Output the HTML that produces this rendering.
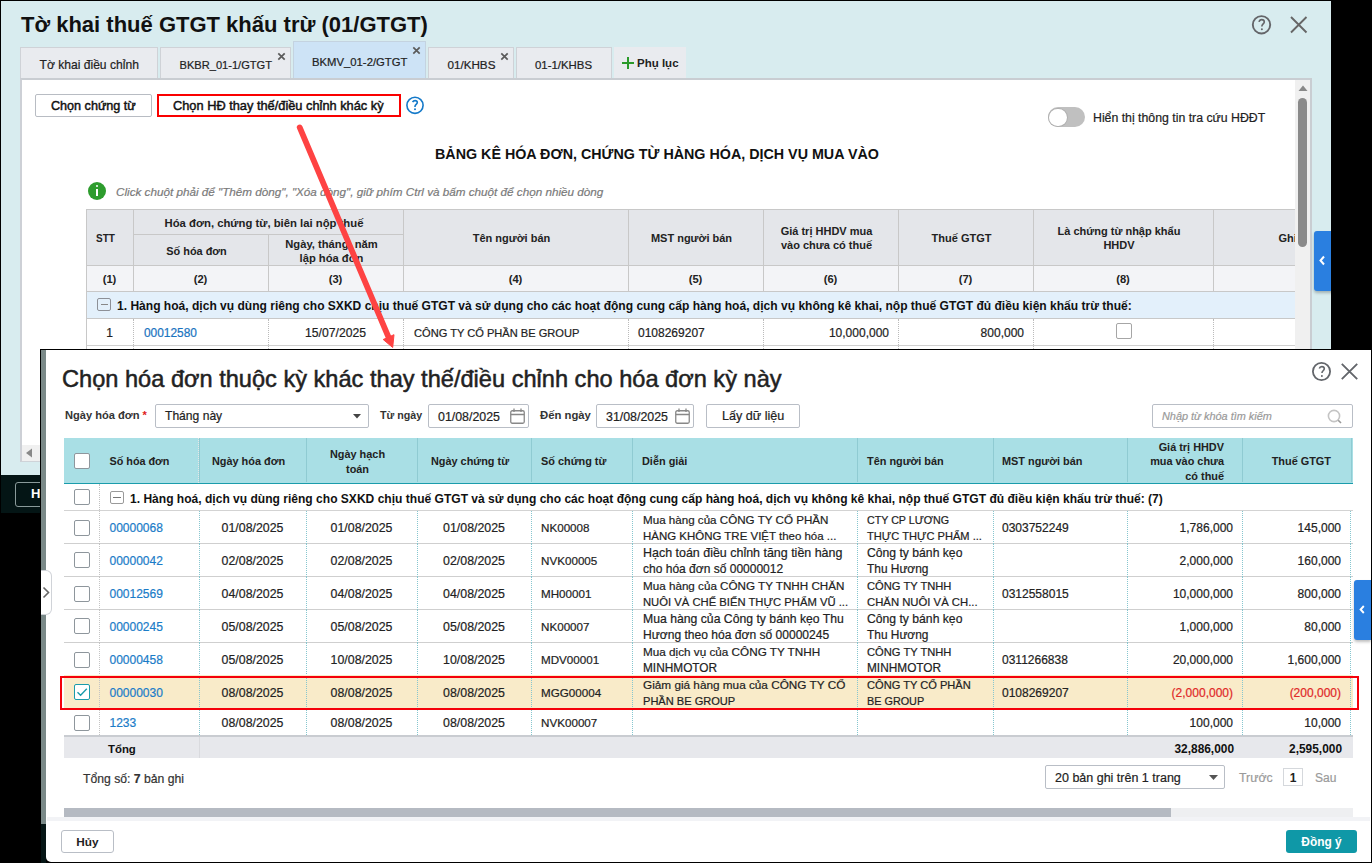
<!DOCTYPE html><html><head><meta charset="utf-8"><style>
*{box-sizing:border-box;margin:0;padding:0}
html,body{width:1372px;height:863px;overflow:hidden;background:#000;font-family:"Liberation Sans",sans-serif;color:#222}
div,svg{position:absolute}
.t{white-space:nowrap;line-height:16px}
.t:not(.b){-webkit-text-stroke:0.2px currentColor}
.b{font-weight:bold}
.c{text-align:center}
.r{text-align:right}
</style></head><body>
<div style="left:1px;top:1px;width:1330px;height:474px;background:#d8ecef;overflow:hidden">
<div class="t b" style="left:20px;top:11px;font-size:22px;line-height:26px;color:#111">Tờ khai thuế GTGT khấu trừ (01/GTGT)</div>
<svg style="left:1250px;top:13px" width="21" height="21" viewBox="0 0 21 21"><circle cx="10.5" cy="10.8" r="8.7" fill="none" stroke="#646569" stroke-width="1.9"/><path d="M8 7.9c0.4-1.5 1.4-2.3 2.7-2.3c1.5 0 2.6 1 2.6 2.3c0 1.8-2.4 2.2-2.4 4.2v0.4" fill="none" stroke="#646569" stroke-width="1.6"/><circle cx="10.9" cy="15.3" r="1" fill="#646569"/></svg>
<svg style="left:1289px;top:15px" width="18" height="18" viewBox="0 0 18 18"><path d="M1 1L16.5 16.5M16.5 1L1 16.5" stroke="#666" stroke-width="1.9"/></svg>
<div style="left:19px;top:46px;width:138px;height:31px;background:#e9ebef;border:1px solid #cfd2d7;border-bottom:none"></div>
<div class="t" style="left:38.5px;top:56px;font-size:12.1px;color:#222">Tờ khai điều chỉnh</div>
<div style="left:159px;top:46px;width:131px;height:31px;background:#e9ebef;border:1px solid #cfd2d7;border-bottom:none"></div>
<div class="t" style="left:178.5px;top:56px;font-size:11.1px;color:#222">BKBR_01-1/GTGT</div>
<svg style="left:276px;top:51px" width="9" height="9" viewBox="0 0 9 9"><path d="M1.3 1.3L7.7 7.7M7.7 1.3L1.3 7.7" stroke="#5a5a5a" stroke-width="1.7"/></svg>
<div style="left:292px;top:40px;width:133px;height:37px;background:#cde3f6;border:1px solid #c4d3e0;border-bottom:none"></div>
<div class="t" style="left:311px;top:53px;font-size:11.3px;color:#222">BKMV_01-2/GTGT</div>
<svg style="left:411px;top:45px" width="9" height="9" viewBox="0 0 9 9"><path d="M1.3 1.3L7.7 7.7M7.7 1.3L1.3 7.7" stroke="#5a5a5a" stroke-width="1.7"/></svg>
<div style="left:427px;top:46px;width:86px;height:31px;background:#e9ebef;border:1px solid #cfd2d7;border-bottom:none"></div>
<div class="t" style="left:446.4px;top:56px;font-size:11.7px;color:#222">01/KHBS</div>
<svg style="left:499px;top:51px" width="9" height="9" viewBox="0 0 9 9"><path d="M1.3 1.3L7.7 7.7M7.7 1.3L1.3 7.7" stroke="#5a5a5a" stroke-width="1.7"/></svg>
<div style="left:515px;top:46px;width:96px;height:31px;background:#e9ebef;border:1px solid #cfd2d7;border-bottom:none"></div>
<div class="t" style="left:534px;top:56px;font-size:11.4px;color:#222">01-1/KHBS</div>
<div style="left:613px;top:46px;width:72px;height:31px;background:#e9ebef"></div>
<svg style="left:621px;top:56px" width="12" height="12" viewBox="0 0 12 12"><path d="M6 0V12M0 6H12" stroke="#2a9a2a" stroke-width="2"/></svg>
<div class="t b" style="left:636px;top:54px;font-size:11.5px;color:#222">Phụ lục</div>
<div style="left:19px;top:77px;width:1292px;height:384px;background:#fff;border-top:2px solid #c9cdd2;border-right:2px solid #c9cdd2;border-left:2px solid #cdd0d6;border-bottom:1px solid #cfd3d8;overflow:hidden">
<div style="left:13px;top:14px;width:117px;height:23px;border:1px solid #b8bcc3;border-radius:2px;background:#fff"></div>
<div class="t" style="left:29px;top:18px;font-size:12.6px;color:#111;-webkit-text-stroke:0.45px #111">Chọn chứng từ</div>
<div style="left:135px;top:14px;width:244px;height:23px;border:2px solid #fa0000;background:#fff"></div>
<div class="t" style="left:151px;top:18px;font-size:12.8px;color:#111;-webkit-text-stroke:0.45px #111">Chọn HĐ thay thế/điều chỉnh khác kỳ</div>
<svg style="left:383px;top:15px" width="20" height="20" viewBox="0 0 20 20"><circle cx="10" cy="10.3" r="8.1" fill="none" stroke="#1479c9" stroke-width="1.6"/><path d="M7.6 7.1c0.5-1 1.3-1.5 2.4-1.5c1.3 0 2.3 0.8 2.3 2c0 1.7-2.3 2-2.3 3.8v0.5" fill="none" stroke="#1479c9" stroke-width="1.6"/><circle cx="10" cy="14.2" r="1" fill="#1479c9"/></svg>
<div style="left:1026px;top:27px;width:37px;height:20px;border-radius:10px;background:#c0c0c0"></div>
<div style="left:1027px;top:28.5px;width:17.5px;height:17.5px;border-radius:9px;background:#fff;box-shadow:0 0 0 1px #b0b0b0"></div>
<div class="t" style="left:1071px;top:30px;font-size:12.3px;color:#222">Hiển thị thông tin tra cứu HĐĐT</div>
<div class="t b" style="left:413px;top:66px;font-size:14.3px;color:#111">BẢNG KÊ HÓA ĐƠN, CHỨNG TỪ HÀNG HÓA, DỊCH VỤ MUA VÀO</div>
<div style="left:66px;top:102px;width:18px;height:18px;border-radius:9px;background:#2d9c2d"></div>
<div style="left:74px;top:105px;width:2.4px;height:2.4px;background:#fff;border-radius:1px"></div>
<div style="left:74px;top:109px;width:2.4px;height:7px;background:#fff"></div>
<div class="t" style="left:94px;top:104px;font-size:11.7px;font-style:italic;color:#7a7a7a">Click chuột phải để "Thêm dòng", "Xóa dòng", giữ phím Ctrl và bấm chuột để chọn nhiều dòng</div>
<div style="left:64px;top:129px;width:1209px;height:56px;background:#e4e6ea"></div>
<div style="left:64px;top:185px;width:1209px;height:26px;background:#f3f4f7"></div>
<div style="left:64px;top:211px;width:1209px;height:27px;background:#e3f0fb"></div>
<div style="left:64px;top:129px;width:1209px;height:1px;background:#c8c8c8"></div>
<div style="left:64px;top:185px;width:1209px;height:1px;background:#c8c8c8"></div>
<div style="left:64px;top:211px;width:1209px;height:1px;background:#c8c8c8"></div>
<div style="left:64px;top:238px;width:1209px;height:1px;background:#c8c8c8"></div>
<div style="left:111px;top:154px;width:270px;height:1px;background:#c8c8c8"></div>
<div style="left:64px;top:265px;width:1209px;height:1px;background:#d0d0d0"></div>
<div style="left:64px;top:129px;width:1px;height:82px;background:#c8c8c8"></div>
<div style="left:111px;top:129px;width:1px;height:82px;background:#c8c8c8"></div>
<div style="left:381px;top:129px;width:1px;height:82px;background:#c8c8c8"></div>
<div style="left:606px;top:129px;width:1px;height:82px;background:#c8c8c8"></div>
<div style="left:741px;top:129px;width:1px;height:82px;background:#c8c8c8"></div>
<div style="left:876px;top:129px;width:1px;height:82px;background:#c8c8c8"></div>
<div style="left:1011px;top:129px;width:1px;height:82px;background:#c8c8c8"></div>
<div style="left:1191px;top:129px;width:1px;height:82px;background:#c8c8c8"></div>
<div style="left:246px;top:154px;width:1px;height:57px;background:#c8c8c8"></div>
<div style="left:246px;top:154px;width:1px;height:31px;background:#c8c8c8"></div>
<div style="left:111px;top:239px;width:0;height:60px;border-left:1px dotted #bbb"></div>
<div style="left:246px;top:239px;width:0;height:60px;border-left:1px dotted #bbb"></div>
<div style="left:381px;top:239px;width:0;height:60px;border-left:1px dotted #bbb"></div>
<div style="left:606px;top:239px;width:0;height:60px;border-left:1px dotted #bbb"></div>
<div style="left:741px;top:239px;width:0;height:60px;border-left:1px dotted #bbb"></div>
<div style="left:876px;top:239px;width:0;height:60px;border-left:1px dotted #bbb"></div>
<div style="left:1011px;top:239px;width:0;height:60px;border-left:1px dotted #bbb"></div>
<div style="left:1191px;top:239px;width:0;height:60px;border-left:1px dotted #bbb"></div>
<div style="left:64px;top:129px;width:1px;height:169px;background:#c8c8c8"></div>
<div class="b c" style="left:60px;top:151.5px;width:47px;font-size:10px;line-height:14px;color:#222">STT</div>
<div class="b c" style="left:107px;top:135.5px;width:270px;font-size:11.3px;line-height:14px;color:#222">Hóa đơn, chứng từ, biên lai nộp thuế</div>
<div class="b c" style="left:107px;top:163.5px;width:135px;font-size:10.9px;line-height:14px;color:#222">Số hóa đơn</div>
<div class="b c" style="left:242px;top:156.5px;width:135px;font-size:11.2px;line-height:14px;color:#222">Ngày, tháng, năm<br>lập hóa đơn</div>
<div class="b c" style="left:377px;top:151.0px;width:225px;font-size:11px;line-height:14px;color:#222">Tên người bán</div>
<div class="b c" style="left:602px;top:151.0px;width:135px;font-size:11px;line-height:14px;color:#222">MST người bán</div>
<div class="b c" style="left:737px;top:144.0px;width:135px;font-size:11px;line-height:14px;color:#222">Giá trị HHDV mua<br>vào chưa có thuế</div>
<div class="b c" style="left:872px;top:151.0px;width:135px;font-size:11px;line-height:14px;color:#222">Thuế GTGT</div>
<div class="b c" style="left:1007px;top:144.0px;width:180px;font-size:11px;line-height:14px;color:#222">Là chứng từ nhập khẩu<br>HHDV</div>
<div class="b c" style="left:1187px;top:151.0px;width:180px;font-size:11px;line-height:14px;color:#222">Ghi chú</div>
<div class="b c" style="left:64px;top:192.0px;width:47px;font-size:11.2px;line-height:14px;color:#222">(1)</div>
<div class="b c" style="left:111px;top:192.0px;width:135px;font-size:11.2px;line-height:14px;color:#222">(2)</div>
<div class="b c" style="left:246px;top:192.0px;width:135px;font-size:11.2px;line-height:14px;color:#222">(3)</div>
<div class="b c" style="left:381px;top:192.0px;width:225px;font-size:11.2px;line-height:14px;color:#222">(4)</div>
<div class="b c" style="left:606px;top:192.0px;width:135px;font-size:11.2px;line-height:14px;color:#222">(5)</div>
<div class="b c" style="left:741px;top:192.0px;width:135px;font-size:11.2px;line-height:14px;color:#222">(6)</div>
<div class="b c" style="left:876px;top:192.0px;width:135px;font-size:11.2px;line-height:14px;color:#222">(7)</div>
<div class="b c" style="left:1011px;top:192.0px;width:180px;font-size:11.2px;line-height:14px;color:#222">(8)</div>
<div class="b c" style="left:1191px;top:192.0px;width:180px;font-size:11.2px;line-height:14px;color:#222">(9)</div>
<div style="left:75px;top:218px;width:14px;height:13px;border:1px solid #8d9097;border-radius:2px"></div>
<div style="left:78.5px;top:224px;width:7px;height:1px;background:#888"></div>
<div class="t b" style="left:95px;top:218px;font-size:12.05px;color:#111">1. Hàng hoá, dịch vụ dùng riêng cho SXKD chịu thuế GTGT và sử dụng cho các hoạt động cung cấp hàng hoá, dịch vụ không kê khai, nộp thuế GTGT đủ điều kiện khấu trừ thuế:</div>
<div class="t c" style="left:64px;top:245px;width:47px;font-size:12px">1</div>
<div class="t" style="left:122px;top:245px;font-size:11.9px;color:#1a73c0">00012580</div>
<div class="t c" style="left:246px;top:245px;width:135px;font-size:12.2px">15/07/2025</div>
<div class="t" style="left:392px;top:245px;font-size:11.1px">CÔNG TY CỔ PHẦN BE GROUP</div>
<div class="t" style="left:616px;top:245px;font-size:12px">0108269207</div>
<div class="t r" style="left:742px;top:245px;width:125px;font-size:12px">10,000,000</div>
<div class="t r" style="left:877px;top:245px;width:125px;font-size:12px">800,000</div>
<div style="left:1094px;top:243px;width:16px;height:16px;border:1px solid #a6a6a6;border-radius:2px;background:#fff"></div>
<div style="left:1273px;top:0px;width:16px;height:365px;background:#f0f0f0"></div>
<svg style="left:1276px;top:5px" width="10" height="7" viewBox="0 0 10 7"><path d="M5 0.5L9.5 6H0.5Z" fill="#888"/></svg>
<div style="left:1276px;top:18px;width:9px;height:149px;border-radius:4.5px;background:#8a8a8a"></div>
<div style="left:-1px;top:365px;width:1274px;height:16px;background:#f0f0f0"></div>
<svg style="left:3px;top:368px" width="8" height="10" viewBox="0 0 8 10"><path d="M1 5L7 0.5V9.5Z" fill="#888"/></svg>
</div>
<div style="left:1313px;top:230px;width:20px;height:60px;background:#2a7fe0;border-radius:3px 0 0 3px;box-shadow:0 2px 3px rgba(0,0,0,.25)"></div>
<svg style="left:1317px;top:254px" width="8" height="11" viewBox="0 0 8 11"><path d="M6 1.5L2.5 5.5L6 9.5" fill="none" stroke="#fff" stroke-width="2"/></svg>
</div>
<div style="left:1px;top:475px;width:40px;height:38px;background:#041515"></div>
<div style="left:15px;top:482px;width:40px;height:25px;border:1px solid #8a9a9a;border-radius:3px"></div>
<div class="t b" style="left:31px;top:486px;font-size:13px;color:#fff">H</div>
<div style="left:40px;top:349px;width:1332px;height:1px;background:#000"></div>
<div style="left:40px;top:349px;width:1px;height:514px;background:#000"></div>
<div style="left:41px;top:350px;width:5px;height:474px;background:#7a8988"></div>
<div style="left:41px;top:824px;width:5px;height:39px;background:#051515"></div>
<div id="fg" style="left:46px;top:350px;width:1325px;height:512px;background:#fff;border-radius:5px 0 0 5px;overflow:hidden">
<div class="t" style="left:16px;top:15px;font-size:23.6px;line-height:28px;color:#222;-webkit-text-stroke:0.5px #222">Chọn hóa đơn thuộc kỳ khác thay thế/điều chỉnh cho hóa đơn kỳ này</div>
<svg style="left:1266px;top:12px" width="20" height="20" viewBox="0 0 20 20"><circle cx="9.5" cy="9.5" r="8.6" fill="none" stroke="#63666b" stroke-width="1.8"/><path d="M7.3 6.6c0.4-1.3 1.3-2 2.5-2c1.5 0 2.5 1 2.5 2.2c0 1.8-2.3 2.1-2.3 3.9v0.4" fill="none" stroke="#63666b" stroke-width="1.6"/><circle cx="9.9" cy="13.9" r="1" fill="#63666b"/></svg>
<svg style="left:1295px;top:13px" width="17" height="17" viewBox="0 0 17 17"><path d="M0.8 0.8L16.2 16.2M16.2 0.8L0.8 16.2" stroke="#63666b" stroke-width="1.9"/></svg>
<div class="t b" style="left:19px;top:57px;font-size:11.1px;color:#333">Ngày hóa đơn <span style="color:#e02020">*</span></div>
<div style="left:109px;top:54px;width:214px;height:24px;border:1px solid #b9bec6;border-radius:2px"></div>
<div class="t" style="left:119px;top:58px;font-size:12.1px;color:#222">Tháng này</div>
<svg style="left:307px;top:64px" width="8" height="5" viewBox="0 0 8 5"><path d="M0 0H8L4 4.5Z" fill="#444"/></svg>
<div class="t b" style="left:334px;top:57px;font-size:10.7px;color:#333">Từ ngày</div>
<div style="left:382px;top:54px;width:101px;height:24px;border:1px solid #b9bec6;border-radius:2px"></div>
<div class="t" style="left:392px;top:59px;font-size:12.4px;color:#222">01/08/2025</div>
<svg style="left:464px;top:58px" width="15" height="16" viewBox="0 0 15 16"><rect x="0.75" y="2.75" width="13.5" height="12.5" rx="1.5" fill="none" stroke="#888" stroke-width="1.3"/><path d="M0.75 6.5H14.25M4 0.5V4M11 0.5V4" stroke="#888" stroke-width="1.3"/></svg>
<div style="left:550px;top:54px;width:98px;height:24px;border:1px solid #b9bec6;border-radius:2px"></div>
<div class="t" style="left:560px;top:59px;font-size:12.4px;color:#222">31/08/2025</div>
<svg style="left:629px;top:58px" width="15" height="16" viewBox="0 0 15 16"><rect x="0.75" y="2.75" width="13.5" height="12.5" rx="1.5" fill="none" stroke="#888" stroke-width="1.3"/><path d="M0.75 6.5H14.25M4 0.5V4M11 0.5V4" stroke="#888" stroke-width="1.3"/></svg>
<div class="t b" style="left:494px;top:57px;font-size:11.3px;color:#333">Đến ngày</div>
<div style="left:660px;top:54px;width:94px;height:24px;border:1px solid #b9bec6;border-radius:2px"></div>
<div class="t" style="left:676px;top:58px;font-size:12.6px;color:#222">Lấy dữ liệu</div>
<div style="left:1106px;top:54px;width:201px;height:24px;border:1px solid #b9bec6;border-radius:2px"></div>
<div class="t" style="left:1116px;top:58px;font-size:10.9px;font-style:italic;color:#9a9a9a">Nhập từ khóa tìm kiếm</div>
<svg style="left:1281px;top:59px" width="16" height="16" viewBox="0 0 16 16"><circle cx="7" cy="7" r="5.6" fill="none" stroke="#c4c4c4" stroke-width="1.6"/><path d="M11.2 11.2L14 14" stroke="#999" stroke-width="1.6"/></svg>
<div style="left:18px;top:88px;width:1289px;height:46px;background:#a9dfe5;border-bottom:1px solid #1a9cab"></div>
<div style="left:153px;top:88px;width:1px;height:44px;background:#8fcbd2"></div>
<div style="left:260px;top:88px;width:1px;height:44px;background:#8fcbd2"></div>
<div style="left:371px;top:88px;width:1px;height:44px;background:#8fcbd2"></div>
<div style="left:485px;top:88px;width:1px;height:44px;background:#8fcbd2"></div>
<div style="left:586px;top:88px;width:1px;height:44px;background:#8fcbd2"></div>
<div style="left:811px;top:88px;width:1px;height:44px;background:#8fcbd2"></div>
<div style="left:947px;top:88px;width:1px;height:44px;background:#8fcbd2"></div>
<div style="left:1081px;top:88px;width:1px;height:44px;background:#8fcbd2"></div>
<div style="left:1196px;top:88px;width:1px;height:44px;background:#8fcbd2"></div>
<div style="left:1305px;top:88px;width:1px;height:44px;background:#8fcbd2"></div>
<div style="left:152px;top:88px;width:0;height:45px;border-left:1px dotted #e6e6e6"></div>
<div style="left:28px;top:103px;width:16px;height:16px;border:1px solid #8e969c;border-radius:2px;background:#fff"></div>
<div class="b" style="left:63.5px;top:104.2px;font-size:10.8px;line-height:14.5px;color:#222;white-space:nowrap">Số hóa đơn</div>
<div class="b c" style="left:153px;top:104.2px;width:99px;font-size:10.9px;line-height:14.5px;color:#222;white-space:nowrap">Ngày hóa đơn</div>
<div class="b c" style="left:260px;top:97.0px;width:103px;font-size:10.9px;line-height:14.5px;color:#222;white-space:nowrap">Ngày hạch<br>toán</div>
<div class="b c" style="left:371px;top:104.2px;width:106px;font-size:10.9px;line-height:14.5px;color:#222;white-space:nowrap">Ngày chứng từ</div>
<div class="b" style="left:495px;top:104.2px;font-size:10.9px;line-height:14.5px;color:#222;white-space:nowrap">Số chứng từ</div>
<div class="b" style="left:596px;top:104.2px;font-size:10.9px;line-height:14.5px;color:#222;white-space:nowrap">Diễn giải</div>
<div class="b" style="left:821px;top:104.2px;font-size:10.9px;line-height:14.5px;color:#222;white-space:nowrap">Tên người bán</div>
<div class="b" style="left:956px;top:104.2px;font-size:10.9px;line-height:14.5px;color:#222;white-space:nowrap">MST người bán</div>
<div class="b r" style="left:1081px;top:89.8px;width:97px;font-size:10.9px;line-height:14.5px;color:#222;white-space:nowrap">Giá trị HHDV<br>mua vào chưa<br>có thuế</div>
<div class="b r" style="left:1196px;top:104.2px;width:89px;font-size:10.9px;line-height:14.5px;color:#222;white-space:nowrap">Thuế GTGT</div>
<div style="left:18px;top:160px;width:1289px;height:1px;background:#d3d3d3"></div>
<div style="left:53px;top:134px;width:0;height:26px;border-left:1px dotted #c0c0c0"></div>
<div style="left:28px;top:139px;width:16px;height:16px;border:1px solid #8e969c;border-radius:2px;background:#fff"></div>
<div style="left:64px;top:141px;width:14px;height:13px;border:1px solid #9a9a9a;border-radius:2px;background:#fff"></div>
<div style="left:67px;top:147px;width:8px;height:1px;background:#777"></div>
<div class="t b" style="left:84px;top:141px;font-size:12.05px;color:#111">1. Hàng hoá, dịch vụ dùng riêng cho SXKD chịu thuế GTGT và sử dụng cho các hoạt động cung cấp hàng hoá, dịch vụ không kê khai, nộp thuế GTGT đủ điều kiện khấu trừ thuế: (7)</div>
<div style="left:18px;top:193px;width:1289px;height:1px;background:#cfcfcf"></div>
<div style="left:53px;top:161px;width:0;height:33px;border-left:1px dotted #c4c4c4"></div>
<div style="left:153px;top:161px;width:0;height:33px;border-left:1px dotted #86c6cf"></div>
<div style="left:260px;top:161px;width:0;height:33px;border-left:1px dotted #86c6cf"></div>
<div style="left:371px;top:161px;width:0;height:33px;border-left:1px dotted #86c6cf"></div>
<div style="left:485px;top:161px;width:0;height:33px;border-left:1px dotted #86c6cf"></div>
<div style="left:586px;top:161px;width:0;height:33px;border-left:1px dotted #86c6cf"></div>
<div style="left:811px;top:161px;width:0;height:33px;border-left:1px dotted #86c6cf"></div>
<div style="left:947px;top:161px;width:0;height:33px;border-left:1px dotted #86c6cf"></div>
<div style="left:1081px;top:161px;width:0;height:33px;border-left:1px dotted #86c6cf"></div>
<div style="left:1196px;top:161px;width:0;height:33px;border-left:1px dotted #86c6cf"></div>
<div style="left:1304px;top:161px;width:0;height:33px;border-left:1px dotted #86c6cf"></div>
<div style="left:28px;top:170px;width:16px;height:16px;border:1px solid #8e969c;border-radius:2px;background:#fff"></div>
<div class="t" style="left:63.5px;top:169.5px;font-size:12px;color:#1a7cc8">00000068</div>
<div class="t c" style="left:153px;top:169.5px;width:107px;font-size:12.35px">01/08/2025</div>
<div class="t c" style="left:260px;top:169.5px;width:111px;font-size:12.35px">01/08/2025</div>
<div class="t c" style="left:371px;top:169.5px;width:114px;font-size:12.35px">01/08/2025</div>
<div class="t" style="left:495px;top:169.5px;font-size:11.65px">NK00008</div>
<div class="t" style="left:597px;top:161.5px;font-size:11.61px;line-height:16px">Mua hàng của CÔNG TY CỔ PHẦN</div>
<div class="t" style="left:597px;top:177.5px;font-size:11.47px;line-height:16px">HÀNG KHÔNG TRE VIỆT theo hóa ...</div>
<div class="t" style="left:821px;top:161.5px;font-size:10.69px;line-height:16px">CTY CP LƯƠNG</div>
<div class="t" style="left:821px;top:177.5px;font-size:11.1px;line-height:16px">THỰC THỰC PHẨM ...</div>
<div class="t" style="left:956px;top:169.5px;font-size:12px">0303752249</div>
<div class="t r" style="left:1081px;top:169.5px;width:106px;font-size:12px;color:#222">1,786,000</div>
<div class="t r" style="left:1196px;top:169.5px;width:99px;font-size:12px;color:#222">145,000</div>
<div style="left:18px;top:226px;width:1289px;height:1px;background:#cfcfcf"></div>
<div style="left:53px;top:194px;width:0;height:33px;border-left:1px dotted #c4c4c4"></div>
<div style="left:153px;top:194px;width:0;height:33px;border-left:1px dotted #86c6cf"></div>
<div style="left:260px;top:194px;width:0;height:33px;border-left:1px dotted #86c6cf"></div>
<div style="left:371px;top:194px;width:0;height:33px;border-left:1px dotted #86c6cf"></div>
<div style="left:485px;top:194px;width:0;height:33px;border-left:1px dotted #86c6cf"></div>
<div style="left:586px;top:194px;width:0;height:33px;border-left:1px dotted #86c6cf"></div>
<div style="left:811px;top:194px;width:0;height:33px;border-left:1px dotted #86c6cf"></div>
<div style="left:947px;top:194px;width:0;height:33px;border-left:1px dotted #86c6cf"></div>
<div style="left:1081px;top:194px;width:0;height:33px;border-left:1px dotted #86c6cf"></div>
<div style="left:1196px;top:194px;width:0;height:33px;border-left:1px dotted #86c6cf"></div>
<div style="left:1304px;top:194px;width:0;height:33px;border-left:1px dotted #86c6cf"></div>
<div style="left:28px;top:202px;width:16px;height:16px;border:1px solid #8e969c;border-radius:2px;background:#fff"></div>
<div class="t" style="left:63.5px;top:202.5px;font-size:12px;color:#1a7cc8">00000042</div>
<div class="t c" style="left:153px;top:202.5px;width:107px;font-size:12.35px">02/08/2025</div>
<div class="t c" style="left:260px;top:202.5px;width:111px;font-size:12.35px">02/08/2025</div>
<div class="t c" style="left:371px;top:202.5px;width:114px;font-size:12.35px">02/08/2025</div>
<div class="t" style="left:495px;top:202.5px;font-size:11.65px">NVK00005</div>
<div class="t" style="left:597px;top:194.5px;font-size:12.46px;line-height:16px">Hạch toán điều chỉnh tăng tiền hàng</div>
<div class="t" style="left:597px;top:210.5px;font-size:12.02px;line-height:16px">cho hóa đơn số 00000012</div>
<div class="t" style="left:821px;top:194.5px;font-size:12.18px;line-height:16px">Công ty bánh kẹo</div>
<div class="t" style="left:821px;top:210.5px;font-size:11.9px;line-height:16px">Thu Hương</div>
<div class="t" style="left:956px;top:202.5px;font-size:12px"></div>
<div class="t r" style="left:1081px;top:202.5px;width:106px;font-size:12px;color:#222">2,000,000</div>
<div class="t r" style="left:1196px;top:202.5px;width:99px;font-size:12px;color:#222">160,000</div>
<div style="left:18px;top:259px;width:1289px;height:1px;background:#cfcfcf"></div>
<div style="left:53px;top:227px;width:0;height:33px;border-left:1px dotted #c4c4c4"></div>
<div style="left:153px;top:227px;width:0;height:33px;border-left:1px dotted #86c6cf"></div>
<div style="left:260px;top:227px;width:0;height:33px;border-left:1px dotted #86c6cf"></div>
<div style="left:371px;top:227px;width:0;height:33px;border-left:1px dotted #86c6cf"></div>
<div style="left:485px;top:227px;width:0;height:33px;border-left:1px dotted #86c6cf"></div>
<div style="left:586px;top:227px;width:0;height:33px;border-left:1px dotted #86c6cf"></div>
<div style="left:811px;top:227px;width:0;height:33px;border-left:1px dotted #86c6cf"></div>
<div style="left:947px;top:227px;width:0;height:33px;border-left:1px dotted #86c6cf"></div>
<div style="left:1081px;top:227px;width:0;height:33px;border-left:1px dotted #86c6cf"></div>
<div style="left:1196px;top:227px;width:0;height:33px;border-left:1px dotted #86c6cf"></div>
<div style="left:1304px;top:227px;width:0;height:33px;border-left:1px dotted #86c6cf"></div>
<div style="left:28px;top:236px;width:16px;height:16px;border:1px solid #8e969c;border-radius:2px;background:#fff"></div>
<div class="t" style="left:63.5px;top:235.5px;font-size:12px;color:#1a7cc8">00012569</div>
<div class="t c" style="left:153px;top:235.5px;width:107px;font-size:12.35px">04/08/2025</div>
<div class="t c" style="left:260px;top:235.5px;width:111px;font-size:12.35px">04/08/2025</div>
<div class="t c" style="left:371px;top:235.5px;width:114px;font-size:12.35px">04/08/2025</div>
<div class="t" style="left:495px;top:235.5px;font-size:11.65px">MH00001</div>
<div class="t" style="left:597px;top:227.5px;font-size:11.67px;line-height:16px">Mua hàng của CÔNG TY TNHH CHĂN</div>
<div class="t" style="left:597px;top:243.5px;font-size:11.25px;line-height:16px">NUÔI VÀ CHẾ BIẾN THỰC PHẨM VŨ ...</div>
<div class="t" style="left:821px;top:227.5px;font-size:11.18px;line-height:16px">CÔNG TY TNHH</div>
<div class="t" style="left:821px;top:243.5px;font-size:11.32px;line-height:16px">CHĂN NUÔI VÀ CH...</div>
<div class="t" style="left:956px;top:235.5px;font-size:12px">0312558015</div>
<div class="t r" style="left:1081px;top:235.5px;width:106px;font-size:12px;color:#222">10,000,000</div>
<div class="t r" style="left:1196px;top:235.5px;width:99px;font-size:12px;color:#222">800,000</div>
<div style="left:18px;top:292px;width:1289px;height:1px;background:#cfcfcf"></div>
<div style="left:53px;top:260px;width:0;height:33px;border-left:1px dotted #c4c4c4"></div>
<div style="left:153px;top:260px;width:0;height:33px;border-left:1px dotted #86c6cf"></div>
<div style="left:260px;top:260px;width:0;height:33px;border-left:1px dotted #86c6cf"></div>
<div style="left:371px;top:260px;width:0;height:33px;border-left:1px dotted #86c6cf"></div>
<div style="left:485px;top:260px;width:0;height:33px;border-left:1px dotted #86c6cf"></div>
<div style="left:586px;top:260px;width:0;height:33px;border-left:1px dotted #86c6cf"></div>
<div style="left:811px;top:260px;width:0;height:33px;border-left:1px dotted #86c6cf"></div>
<div style="left:947px;top:260px;width:0;height:33px;border-left:1px dotted #86c6cf"></div>
<div style="left:1081px;top:260px;width:0;height:33px;border-left:1px dotted #86c6cf"></div>
<div style="left:1196px;top:260px;width:0;height:33px;border-left:1px dotted #86c6cf"></div>
<div style="left:1304px;top:260px;width:0;height:33px;border-left:1px dotted #86c6cf"></div>
<div style="left:28px;top:268px;width:16px;height:16px;border:1px solid #8e969c;border-radius:2px;background:#fff"></div>
<div class="t" style="left:63.5px;top:268.5px;font-size:12px;color:#1a7cc8">00000245</div>
<div class="t c" style="left:153px;top:268.5px;width:107px;font-size:12.35px">05/08/2025</div>
<div class="t c" style="left:260px;top:268.5px;width:111px;font-size:12.35px">05/08/2025</div>
<div class="t c" style="left:371px;top:268.5px;width:114px;font-size:12.35px">05/08/2025</div>
<div class="t" style="left:495px;top:268.5px;font-size:11.65px">NK00007</div>
<div class="t" style="left:597px;top:260.5px;font-size:12.22px;line-height:16px">Mua hàng của Công ty bánh kẹo Thu</div>
<div class="t" style="left:597px;top:276.5px;font-size:12.07px;line-height:16px">Hương theo hóa đơn số 00000245</div>
<div class="t" style="left:821px;top:260.5px;font-size:12.18px;line-height:16px">Công ty bánh kẹo</div>
<div class="t" style="left:821px;top:276.5px;font-size:11.9px;line-height:16px">Thu Hương</div>
<div class="t" style="left:956px;top:268.5px;font-size:12px"></div>
<div class="t r" style="left:1081px;top:268.5px;width:106px;font-size:12px;color:#222">1,000,000</div>
<div class="t r" style="left:1196px;top:268.5px;width:99px;font-size:12px;color:#222">80,000</div>
<div style="left:18px;top:325px;width:1289px;height:1px;background:#cfcfcf"></div>
<div style="left:53px;top:293px;width:0;height:33px;border-left:1px dotted #c4c4c4"></div>
<div style="left:153px;top:293px;width:0;height:33px;border-left:1px dotted #86c6cf"></div>
<div style="left:260px;top:293px;width:0;height:33px;border-left:1px dotted #86c6cf"></div>
<div style="left:371px;top:293px;width:0;height:33px;border-left:1px dotted #86c6cf"></div>
<div style="left:485px;top:293px;width:0;height:33px;border-left:1px dotted #86c6cf"></div>
<div style="left:586px;top:293px;width:0;height:33px;border-left:1px dotted #86c6cf"></div>
<div style="left:811px;top:293px;width:0;height:33px;border-left:1px dotted #86c6cf"></div>
<div style="left:947px;top:293px;width:0;height:33px;border-left:1px dotted #86c6cf"></div>
<div style="left:1081px;top:293px;width:0;height:33px;border-left:1px dotted #86c6cf"></div>
<div style="left:1196px;top:293px;width:0;height:33px;border-left:1px dotted #86c6cf"></div>
<div style="left:1304px;top:293px;width:0;height:33px;border-left:1px dotted #86c6cf"></div>
<div style="left:28px;top:302px;width:16px;height:16px;border:1px solid #8e969c;border-radius:2px;background:#fff"></div>
<div class="t" style="left:63.5px;top:301.5px;font-size:12px;color:#1a7cc8">00000458</div>
<div class="t c" style="left:153px;top:301.5px;width:107px;font-size:12.35px">05/08/2025</div>
<div class="t c" style="left:260px;top:301.5px;width:111px;font-size:12.35px">10/08/2025</div>
<div class="t c" style="left:371px;top:301.5px;width:114px;font-size:12.35px">10/08/2025</div>
<div class="t" style="left:495px;top:301.5px;font-size:11.65px">MDV00001</div>
<div class="t" style="left:597px;top:293.5px;font-size:11.72px;line-height:16px">Mua dịch vụ của CÔNG TY TNHH</div>
<div class="t" style="left:597px;top:309.5px;font-size:11.85px;line-height:16px">MINHMOTOR</div>
<div class="t" style="left:821px;top:293.5px;font-size:11.18px;line-height:16px">CÔNG TY TNHH</div>
<div class="t" style="left:821px;top:309.5px;font-size:11.85px;line-height:16px">MINHMOTOR</div>
<div class="t" style="left:956px;top:301.5px;font-size:12px">0311266838</div>
<div class="t r" style="left:1081px;top:301.5px;width:106px;font-size:12px;color:#222">20,000,000</div>
<div class="t r" style="left:1196px;top:301.5px;width:99px;font-size:12px;color:#222">1,600,000</div>
<div style="left:18px;top:325px;width:1289px;height:33px;background:#f9ebc9"></div>
<div style="left:18px;top:358px;width:1289px;height:1px;background:#cfcfcf"></div>
<div style="left:53px;top:326px;width:0;height:33px;border-left:1px dotted #c4c4c4"></div>
<div style="left:153px;top:326px;width:0;height:33px;border-left:1px dotted #86c6cf"></div>
<div style="left:260px;top:326px;width:0;height:33px;border-left:1px dotted #86c6cf"></div>
<div style="left:371px;top:326px;width:0;height:33px;border-left:1px dotted #86c6cf"></div>
<div style="left:485px;top:326px;width:0;height:33px;border-left:1px dotted #86c6cf"></div>
<div style="left:586px;top:326px;width:0;height:33px;border-left:1px dotted #86c6cf"></div>
<div style="left:811px;top:326px;width:0;height:33px;border-left:1px dotted #86c6cf"></div>
<div style="left:947px;top:326px;width:0;height:33px;border-left:1px dotted #86c6cf"></div>
<div style="left:1081px;top:326px;width:0;height:33px;border-left:1px dotted #86c6cf"></div>
<div style="left:1196px;top:326px;width:0;height:33px;border-left:1px dotted #86c6cf"></div>
<div style="left:1304px;top:326px;width:0;height:33px;border-left:1px dotted #86c6cf"></div>
<div style="left:28px;top:334px;width:16px;height:16px;border:1px solid #1a9cab;border-radius:2px;background:#fff" ></div>
<svg style="left:30px;top:336px" width="12" height="12" viewBox="0 0 12 12"><path d="M1.5 6.2L4.6 9.2L10.8 2.8" fill="none" stroke="#1a9cab" stroke-width="1.4"/></svg>
<div class="t" style="left:63.5px;top:334.5px;font-size:12px;color:#1a7cc8">00000030</div>
<div class="t c" style="left:153px;top:334.5px;width:107px;font-size:12.35px">08/08/2025</div>
<div class="t c" style="left:260px;top:334.5px;width:111px;font-size:12.35px">08/08/2025</div>
<div class="t c" style="left:371px;top:334.5px;width:114px;font-size:12.35px">08/08/2025</div>
<div class="t" style="left:495px;top:334.5px;font-size:11.65px">MGG00004</div>
<div class="t" style="left:597px;top:326.5px;font-size:11.78px;line-height:16px">Giảm giá hàng mua của CÔNG TY CỔ</div>
<div class="t" style="left:597px;top:342.5px;font-size:11.07px;line-height:16px">PHẦN BE GROUP</div>
<div class="t" style="left:821px;top:326.5px;font-size:11.1px;line-height:16px">CÔNG TY CỔ PHẦN</div>
<div class="t" style="left:821px;top:342.5px;font-size:10.83px;line-height:16px">BE GROUP</div>
<div class="t" style="left:956px;top:334.5px;font-size:12px">0108269207</div>
<div class="t r" style="left:1081px;top:334.5px;width:106px;font-size:12px;color:#e02828">(2,000,000)</div>
<div class="t r" style="left:1196px;top:334.5px;width:99px;font-size:12px;color:#e02828">(200,000)</div>
<div style="left:53px;top:359px;width:0;height:28px;border-left:1px dotted #c4c4c4"></div>
<div style="left:153px;top:359px;width:0;height:28px;border-left:1px dotted #86c6cf"></div>
<div style="left:260px;top:359px;width:0;height:28px;border-left:1px dotted #86c6cf"></div>
<div style="left:371px;top:359px;width:0;height:28px;border-left:1px dotted #86c6cf"></div>
<div style="left:485px;top:359px;width:0;height:28px;border-left:1px dotted #86c6cf"></div>
<div style="left:586px;top:359px;width:0;height:28px;border-left:1px dotted #86c6cf"></div>
<div style="left:811px;top:359px;width:0;height:28px;border-left:1px dotted #86c6cf"></div>
<div style="left:947px;top:359px;width:0;height:28px;border-left:1px dotted #86c6cf"></div>
<div style="left:1081px;top:359px;width:0;height:28px;border-left:1px dotted #86c6cf"></div>
<div style="left:1196px;top:359px;width:0;height:28px;border-left:1px dotted #86c6cf"></div>
<div style="left:1304px;top:359px;width:0;height:28px;border-left:1px dotted #86c6cf"></div>
<div style="left:28px;top:365px;width:16px;height:16px;border:1px solid #8e969c;border-radius:2px;background:#fff"></div>
<div class="t" style="left:63.5px;top:365.0px;font-size:12px;color:#1a7cc8">1233</div>
<div class="t c" style="left:153px;top:365.0px;width:107px;font-size:12.35px">08/08/2025</div>
<div class="t c" style="left:260px;top:365.0px;width:111px;font-size:12.35px">08/08/2025</div>
<div class="t c" style="left:371px;top:365.0px;width:114px;font-size:12.35px">08/08/2025</div>
<div class="t" style="left:495px;top:365.0px;font-size:11.65px">NVK00007</div>
<div class="t" style="left:956px;top:365.0px;font-size:12px"></div>
<div class="t r" style="left:1081px;top:365.0px;width:106px;font-size:12px;color:#222">100,000</div>
<div class="t r" style="left:1196px;top:365.0px;width:99px;font-size:12px;color:#222">10,000</div>
<div style="left:18px;top:385px;width:1289px;height:2px;background:#c9ccd1"></div>
<div style="left:18px;top:387px;width:1289px;height:21px;background:#e7e8ec"></div>
<div style="left:153px;top:387px;width:1px;height:21px;background:#d9dade"></div>
<div class="t b" style="left:62px;top:391px;font-size:11.4px;color:#111">Tổng</div>
<div class="t b r" style="left:1081px;top:391px;width:107px;font-size:11.9px;color:#111">32,886,000</div>
<div class="t b r" style="left:1196px;top:391px;width:100px;font-size:11.9px;color:#111">2,595,000</div>
<div style="left:14px;top:326px;width:1299px;height:34px;border:2px solid #f5000a"></div>
<div class="t" style="left:37px;top:421px;font-size:12.2px;color:#333">Tổng số: <b>7</b> bản ghi</div>
<div style="left:999px;top:415px;width:180px;height:24px;border:1px solid #b9bec6;border-radius:2px"></div>
<div class="t" style="left:1009px;top:420px;font-size:12.5px;color:#222">20 bản ghi trên 1 trang</div>
<svg style="left:1163px;top:425px" width="9" height="5" viewBox="0 0 9 5"><path d="M0 0H9L4.5 5Z" fill="#555"/></svg>
<div class="t" style="left:1193px;top:420px;font-size:12.3px;color:#9a9a9a">Trước</div>
<div style="left:1237px;top:418px;width:20px;height:18px;border:1px solid #d5d8dc"></div>
<div class="t b c" style="left:1237px;top:420px;width:20px;font-size:12px;color:#222">1</div>
<div class="t" style="left:1269px;top:420px;font-size:12px;color:#9a9a9a">Sau</div>
<div style="left:18px;top:458px;width:1289px;height:9px;background:#eeeff1"></div>
<div style="left:18px;top:458px;width:1107px;height:9px;background:#b5bac2"></div>
<div style="left:1px;top:467px;width:1323px;height:4px;background:#f2f3f6"></div>
<div style="left:15px;top:480px;width:53px;height:23px;border:1px solid #b9bec6;border-radius:3px"></div>
<div class="t b c" style="left:15px;top:484px;width:53px;font-size:11.8px;color:#222">Hủy</div>
<div style="left:1240px;top:480px;width:71px;height:23px;background:#0f98a7;border-radius:3px"></div>
<div class="t b c" style="left:1240px;top:484px;width:71px;font-size:11.9px;color:#fff">Đồng ý</div>
</div>
<div style="left:41px;top:570px;width:11px;height:45px;background:#fff;border:1px solid #d0d3d8;border-left:none;border-radius:0 6px 6px 0"></div>
<svg style="left:42px;top:586px" width="8" height="13" viewBox="0 0 8 13"><path d="M1.5 1.5L6.5 6.5L1.5 11.5" fill="none" stroke="#666" stroke-width="1.6"/></svg>
<div style="left:1354px;top:580px;width:17px;height:60px;background:#2a7fe0;border-radius:3px 0 0 3px;box-shadow:0 2px 3px rgba(0,0,0,.25)"></div>
<svg style="left:1358px;top:605px" width="8" height="9" viewBox="0 0 8 9"><path d="M5.8 1L2.6 4.5L5.8 8" fill="none" stroke="#fff" stroke-width="1.9"/></svg>
<svg style="left:0;top:0" width="1372" height="863" viewBox="0 0 1372 863"><path d="M299.7 127.4L388.6 337.4" stroke="#fe4343" stroke-width="5.8" stroke-linecap="round"/><path d="M392.7 347.5L383.2 339.5L394 334.7Z" fill="#fe4343" stroke="#fe4343" stroke-width="1" stroke-linejoin="round"/></svg>
</body></html>
